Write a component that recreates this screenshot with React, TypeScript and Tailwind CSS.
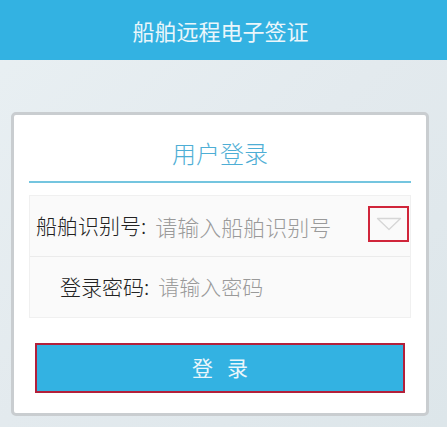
import React from 'react';

const font = { fontFamily: '"Noto Sans CJK SC", "Liberation Sans", sans-serif' };

export default function App() {
  return (
    <div
      className="w-[447px] h-[427px] overflow-hidden bg-gradient-to-br from-[#e9f0f3] via-[#e3eaee] to-[#dde6ea]"
      style={font}
    >
      {/* header */}
      <div className="h-[60px] bg-[#33b2e2] flex items-center justify-center">
        <h1 className="text-[22px] text-[#eaf6fb] pr-[6px]">船舶远程电子签证</h1>
      </div>

      <div className="pt-[52px] pl-[11px]">
        <div className="w-[418px] h-[304px] bg-white border-[3px] border-[#c9cdd0] rounded-[5px] px-[15px] pt-[10px]">
          <div className="h-[56px] flex items-center justify-center text-[24px] text-[#4eaed5] font-light">
            用户登录
          </div>
          <div className="h-[2px] bg-[#74c5df]" />

          <div className="mt-[12px] bg-[#fafafa] border border-[#f0f0f0]">
            <div className="h-[61px] flex items-center pl-[6px] pr-[1px] border-b border-[#ebebeb]">
              <span className="text-[21px] text-[#222] font-light">船舶识别号:</span>
              <span className="text-[22px] text-[#9a9a9a] font-light ml-[9px] flex-1">请输入船舶识别号</span>
              <div className="w-[41px] h-[36px] border-2 border-[#d0253a] flex items-center justify-center mb-[4px]">
                <svg width="26" height="14" viewBox="0 0 26 14">
                  <path d="M1.5 1.5 L24.5 1.5 L13 12.5 Z" fill="none" stroke="#d6d6d6" strokeWidth="1.3" strokeLinejoin="round" />
                </svg>
              </div>
            </div>
            <div className="h-[60px] flex items-center pl-[30px]">
              <span className="text-[21px] text-[#222] font-light">登录密码:</span>
              <span className="text-[21px] text-[#9a9a9a] font-light ml-[9px]">请输入密码</span>
            </div>
          </div>

          <div className="mt-[25px] px-[6px]">
            <button className="w-full h-[50px] bg-[#33b2e2] border-2 border-[#b3203a] text-[21px] text-[#eaf6fb] tracking-[14px] pl-[14px]">
              登录
            </button>
          </div>
        </div>
      </div>
    </div>
  );
}
